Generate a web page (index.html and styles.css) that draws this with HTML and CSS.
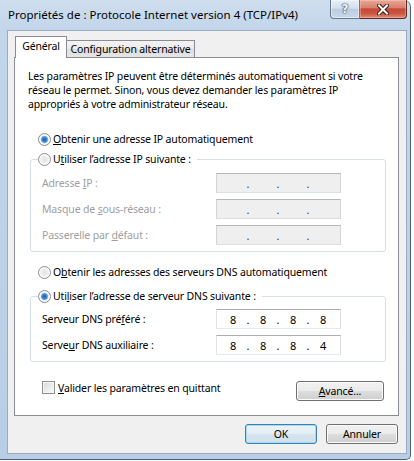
FILE: index.html
```html
<!DOCTYPE html>
<html lang="fr">
<head>
<meta charset="utf-8">
<title>Propriétés de : Protocole Internet version 4 (TCP/IPv4)</title>
<link rel="stylesheet" href="styles.css">
</head>
<body>
<div class="window">
  <div class="titlebar">
    <div class="title">Propriétés de : Protocole Internet version 4 (TCP/IPv4)</div>
    <div class="caption">
      <div class="cap-btn help"><span class="q">?</span></div>
      <div class="cap-btn close">
        <svg width="12" height="11" viewBox="0 0 12 11">
          <path d="M2 1.5 L10 9.5 M10 1.5 L2 9.5" stroke="#3a1a14" stroke-width="4" stroke-linecap="square" fill="none"/>
          <path d="M2 1.5 L10 9.5 M10 1.5 L2 9.5" stroke="#ffffff" stroke-width="2" stroke-linecap="square" fill="none"/>
        </svg>
      </div>
    </div>
  </div>
  <div class="client">
    <div class="tabs">
      <div class="tab active">Général</div>
      <div class="tab inactive">Configuration alternative</div>
    </div>
    <div class="panel">
      <p class="intro">Les paramètres IP peuvent être déterminés automatiquement si votre<br>réseau le permet. Sinon, vous devez demander les paramètres IP<br>appropriés à votre administrateur réseau.</p>

      <div class="option opt-first"><span class="radio checked"></span><span><u>O</u>btenir une adresse IP automatiquement</span></div>

      <fieldset class="group group-ip">
        <legend class="option legend"><span class="radio"></span><span>U<u>t</u>iliser l’adresse IP suivante :</span></legend>
        <div class="fields">
          <span class="label disabled">Adresse <u>I</u>P :</span>
          <div class="ipbox off"><span class="oct"></span><span class="dot">.</span><span class="oct"></span><span class="dot">.</span><span class="oct"></span><span class="dot">.</span><span class="oct"></span></div>
          <span class="label disabled">Masque de <u>s</u>ous-réseau :</span>
          <div class="ipbox off"><span class="oct"></span><span class="dot">.</span><span class="oct"></span><span class="dot">.</span><span class="oct"></span><span class="dot">.</span><span class="oct"></span></div>
          <span class="label disabled">Passerelle par <u>d</u>éfaut :</span>
          <div class="ipbox off"><span class="oct"></span><span class="dot">.</span><span class="oct"></span><span class="dot">.</span><span class="oct"></span><span class="dot">.</span><span class="oct"></span></div>
        </div>
      </fieldset>

      <div class="option opt-dns"><span class="radio"></span><span>O<u>b</u>tenir les adresses des serveurs DNS automatiquement</span></div>

      <fieldset class="group group-dns">
        <legend class="option legend"><span class="radio checked"></span><span>Uti<u>l</u>iser l’adresse de serveur DNS suivante :</span></legend>
        <div class="fields">
          <span class="label">Serveur DNS pré<u>f</u>éré :</span>
          <div class="ipbox"><span class="oct">8</span><span class="dot">.</span><span class="oct">8</span><span class="dot">.</span><span class="oct">8</span><span class="dot">.</span><span class="oct">8</span></div>
          <span class="label">Serve<u>u</u>r DNS auxiliaire :</span>
          <div class="ipbox"><span class="oct">8</span><span class="dot">.</span><span class="oct">8</span><span class="dot">.</span><span class="oct">8</span><span class="dot">.</span><span class="oct">4</span></div>
        </div>
      </fieldset>

      <div class="bottom-row">
        <div class="check-row"><span class="checkbox"></span><span><u>V</u>alider les paramètres en quittant</span></div>
        <div class="btn btn-adv"><span><u>A</u>vancé...</span></div>
      </div>
    </div>
    <div class="footer">
      <div class="btn default">OK</div>
      <div class="btn">Annuler</div>
    </div>
  </div>
</div>
</body>
</html>
```

FILE: styles.css
```css
* { box-sizing: border-box; }
html, body { margin: 0; padding: 0; background: #ffffff; }
body {
  font-family: "Noto Sans", "Open Sans", sans-serif;
  font-size: 10.5px;
  letter-spacing: -0.15px;
  color: #000;
}
u { text-decoration: underline; text-underline-offset: 1px; }

.window {
  width: 411px;
  height: 460px;
  padding: 0 3px 5px 7px;
  display: flex;
  flex-direction: column;
  background: linear-gradient(180deg, #cfdeef 0px, #c2d5ea 30px, #bcd1e8 60%, #b8cee6 100%);
  border-right: 1px solid #4d6075;
  border-bottom: 1px solid #4d6075;
  border-top-right-radius: 7px;
  border-bottom-right-radius: 5px;
}

.titlebar {
  height: 30px;
  display: flex;
  align-items: flex-start;
  justify-content: space-between;
}
.title {
  font-size: 11.5px;
  letter-spacing: 0;
  line-height: 16px;
  margin-top: 7px;
  padding-left: 1px;
  color: #000;
}
.caption { display: flex; }
.cap-btn {
  height: 19px;
  display: flex;
  align-items: center;
  justify-content: center;
}
.help {
  width: 30px;
  border: 1px solid #66788f;
  border-top: none;
  border-bottom-left-radius: 4px;
  background: linear-gradient(180deg, #e6eef7 0%, #d3e0ee 45%, #bccde1 52%, #c9d9ea 100%);
  box-shadow: inset 0 0 0 1px rgba(255,255,255,0.45);
}
.q {
  font-family: "DejaVu Sans", sans-serif;
  font-size: 12px;
  font-weight: bold;
  color: #f4f7fb;
  line-height: 14px;
  text-shadow: 0 0 1px #334455, 0 0 1px #334455, 0 0 2px #556677;
}
.close {
  width: 47px;
  border: 1px solid #5a2a22;
  border-top: none;
  border-left: none;
  border-bottom-right-radius: 4px;
  background: linear-gradient(180deg, #e9a898 0%, #d88170 42%, #c44a36 50%, #cc5641 75%, #e08d74 100%);
  box-shadow: inset 0 0 0 1px rgba(255,220,210,0.35);
}
.close svg { display: block; }

.client {
  height: 424px;
  border: 1px solid #9aabbf;
  background: #f0f0f0;
  padding: 5px 7px 0 6px;
  display: flex;
  flex-direction: column;
}

.tabs {
  display: flex;
  align-items: flex-end;
  padding-left: 1px;
  margin-bottom: -1px;
  position: relative;
  z-index: 1;
}
.tab {
  border: 1px solid #898c95;
  border-bottom: none;
  text-align: center;
  white-space: nowrap;
}
.tab.active {
  width: 52px;
  height: 22px;
  background: #ffffff;
  line-height: 19px;
}
.tab.inactive {
  width: 128px;
  height: 17px;
  margin-bottom: 1px;
  border-left: none;
  background: linear-gradient(180deg, #f3f3f3 0%, #ebebeb 50%, #dddddd 51%, #e6e6e6 100%);
  line-height: 16px;
}

.panel {
  height: 359px;
  background: #ffffff;
  border: 1px solid #898c95;
  padding-top: 11px;
  display: flex;
  flex-direction: column;
  align-items: flex-start;
}
.intro {
  margin: 0 0 0 13px;
  line-height: 14px;
}

.option {
  display: flex;
  align-items: center;
  height: 16px;
  gap: 2px;
  white-space: nowrap;
}
.opt-first { margin: 20px 0 0 23px; }
.opt-dns { margin: 12px 0 0 23px; }

.radio {
  width: 13px;
  height: 13px;
  flex: none;
  border-radius: 50%;
  border: 1px solid #8b8d90;
  background: radial-gradient(circle at 50% 50%, #e2e2e2 0, #ededed 3px, #f6f6f6 4.5px, #ffffff 5.5px);
}
.radio.checked {
  background: radial-gradient(circle at 50% 50%, #1f5ea8 0, #2f74c0 1.5px, #5aa3e2 3px, #9fd0f5 3.6px, #ffffff 4.2px, #f4f4f4 5.5px);
}

.group {
  margin: 4px 0 0 15px;
  width: 356px;
  padding: 0 0 6px 0;
  border: 1px solid #d5dfe5;
  border-radius: 3px;
  min-width: 0;
}
.group-dns { margin-top: 8px; }
.group-ip .fields { padding-top: 6px; }
.group-dns .fields { padding-top: 5px; }
.legend {
  margin-left: 7px;
  padding: 0 6px 0 0;
}
.fields {
  display: grid;
  grid-template-columns: 174px 125px;
  row-gap: 6px;
  align-items: center;
  padding-left: 11px;
}
.label { white-space: nowrap; }
.label.disabled { color: #a0a0a0; }

.ipbox {
  width: 125px;
  height: 20px;
  display: flex;
  align-items: center;
  padding-left: 5px;
  background: #ffffff;
  border: 1px solid;
  border-color: #abadb3 #dbdfe6 #e3e9ef #e2e3ea;
}
.ipbox.off {
  background: #efefef;
  border-color: #b4b7ba #d2d5d8 #dcdfe2 #d2d5d8;
}
.oct { width: 22px; text-align: center; font-size: 11px; }
.dot { width: 8px; text-align: center; font-size: 11px; }
.ipbox.off .dot { color: #3a3a3a; }

.bottom-row {
  align-self: stretch;
  display: flex;
  justify-content: space-between;
  align-items: flex-start;
  margin: 19px 14px 0 27px;
}
.check-row {
  display: flex;
  align-items: center;
  gap: 3px;
  height: 13px;
  white-space: nowrap;
}
.checkbox {
  width: 13px;
  height: 13px;
  flex: none;
  border: 1px solid #8e8f8f;
  background: linear-gradient(135deg, #d6d6d6 0%, #eeeeee 60%, #fafafa 100%);
  box-shadow: inset 0 0 0 1px #f6f6f6;
}

.btn {
  width: 72px;
  height: 20px;
  border: 1px solid #707070;
  border-radius: 3px;
  background: linear-gradient(180deg, #f2f2f2 0%, #ebebeb 48%, #dddddd 52%, #cfcfcf 100%);
  box-shadow: inset 0 0 0 1px #fbfbfb;
  display: flex;
  align-items: center;
  justify-content: center;
  white-space: nowrap;
}
.btn-adv { width: 88px; }
.btn.default {
  border-color: #3c7fb1;
  background: linear-gradient(180deg, #edf4f9 0%, #e3edf4 48%, #d6e5ef 52%, #cfe0ec 100%);
  box-shadow: inset 0 0 0 1px #9fdcf6;
}

.footer {
  display: flex;
  justify-content: flex-end;
  gap: 9px;
  margin-top: 8px;
  padding-right: 1px;
}
```
